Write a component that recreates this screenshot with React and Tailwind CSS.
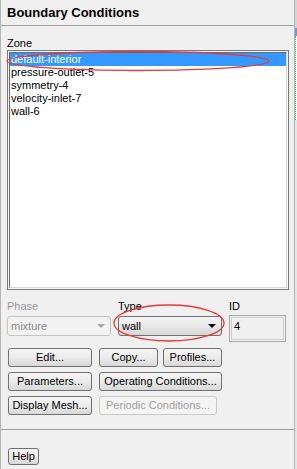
const zones = ['default-interior', 'pressure-outlet-5', 'symmetry-4', 'velocity-inlet-7', 'wall-6']

function Btn({ children, w, h = 'h-[19px]', disabled }) {
  return (
    <button
      className={`${h} ${w} rounded-[3px] border text-[11px] leading-none ${
        disabled
          ? 'border-[#c8c8c8] bg-[#f4f4f4] text-[#a0a0a0]'
          : 'border-[#707070] bg-gradient-to-b from-[#f6f6f6] via-[#ebebeb] to-[#d8d8d8] text-black'
      }`}
    >
      {children}
    </button>
  )
}

function Arrow({ color }) {
  return (
    <svg width="8" height="4" viewBox="0 0 8 4">
      <path d="M0 0 L8 0 L4 4 Z" fill={color} />
    </svg>
  )
}

export default function App() {
  return (
    <div className="flex w-[297px] h-[469px] bg-[#f0f0f0] overflow-hidden text-black" style={{ fontFamily: '"Liberation Sans", Arial, sans-serif' }}>
      <div className="relative w-[295px] h-full border-l border-[#b4b4b4] border-r border-[#7c7c7c]">
        {/* title */}
        <div className="h-[26px] border-b border-[#a0a0a0] pl-[6px] pt-[6px] text-[13px] font-bold leading-none">
          Boundary Conditions
        </div>

        <div className="pl-[6px] pt-[12px] text-[11px] leading-none">Zone</div>

        {/* zone list */}
        <div className="ml-[6px] mt-[1px] w-[282px] h-[240px] border border-[#7a7a7a] p-px bg-[#f8f8f8]">
          <div className="h-full border-l border-t border-[#6a6a6a] border-r border-b border-r-[#d8d8d8] border-b-[#d8d8d8] bg-white">
            {zones.map((z, i) => (
              <div
                key={z}
                className={`h-[13px] pl-px text-[11px] leading-[13px] ${i === 0 ? 'bg-[#3399ff] text-white' : 'text-black'}`}
              >
                {z}
              </div>
            ))}
          </div>
        </div>

        {/* phase / type / id */}
        <div className="flex mt-[11px] pl-[6px]">
          <div className="w-[111px]">
            <div className="text-[11px] leading-none text-[#9a9a9a] h-[13px]">Phase</div>
            <div className="mt-[2px] flex items-center justify-between w-[104px] h-[20px] rounded-[3px] border border-[#c4c4c4] bg-[#f2f2f2] pl-[3px] pr-[5px] text-[11px] text-[#8a8a8a]">
              mixture
              <Arrow color="#a8a8a8" />
            </div>
          </div>
          <div className="w-[111px]">
            <div className="text-[11px] leading-none h-[13px]">Type</div>
            <div className="mt-[2px] flex items-center justify-between w-[104px] h-[20px] rounded-[3px] border border-[#707070] bg-gradient-to-b from-[#f4f4f4] via-[#e8e8e8] to-[#d6d6d6] pl-[3px] pr-[5px] text-[11px]">
              wall
              <Arrow color="#000" />
            </div>
          </div>
          <div>
            <div className="text-[11px] leading-none h-[13px]">ID</div>
            <div className="mt-[1px] w-[57px] h-[27px] border border-[#a9a9a9] p-px">
              <div className="h-full border border-[#d0d0d0] bg-[#f0f0f0] pl-[2px] pt-[3px] text-[11px] leading-none">4</div>
            </div>
          </div>
        </div>

        {/* buttons */}
        <div className="mt-[6px] pl-[7px] flex flex-col gap-[5px]">
          <div className="flex gap-[7px]">
            <Btn w="w-[84px]">Edit...</Btn>
            <div className="flex gap-[5px]">
              <Btn w="w-[59px]">Copy...</Btn>
              <Btn w="w-[59px]">Profiles...</Btn>
            </div>
          </div>
          <div className="flex gap-[7px]">
            <Btn w="w-[84px]">Parameters...</Btn>
            <Btn w="w-[123px]">Operating Conditions...</Btn>
          </div>
          <div className="flex gap-[7px]">
            <Btn w="w-[84px]">Display Mesh...</Btn>
            <Btn w="w-[118px]" disabled>Periodic Conditions...</Btn>
          </div>
        </div>

        <div className="mt-[14px] border-t border-[#a0a0a0]" />
        <div className="mt-[13px] pl-[7px]">
          <Btn w="w-[31px]" h="h-[17px]">Help</Btn>
        </div>

        {/* red markup ellipses */}
        <svg className="absolute left-0 top-0 pointer-events-none" width="295" height="469">
          <ellipse cx="137" cy="61" rx="131" ry="9.5" fill="none" stroke="#e8383c" strokeWidth="1.3" />
          <ellipse cx="168" cy="323" rx="55" ry="18" fill="none" stroke="#e8383c" strokeWidth="1.3" />
        </svg>
      </div>

      {/* neighbouring window sliver */}
      <div className="w-[2px] h-full flex flex-col">
        <div className="h-[28px] bg-[#d4d4d4]" />
        <div className="h-[8px] bg-[#6f95e0]" />
        <div className="h-[84px] bg-white border-l border-dotted border-[#22dd22]" />
        <div className="flex-1 bg-[#e6e6e6]" />
      </div>
    </div>
  )
}
